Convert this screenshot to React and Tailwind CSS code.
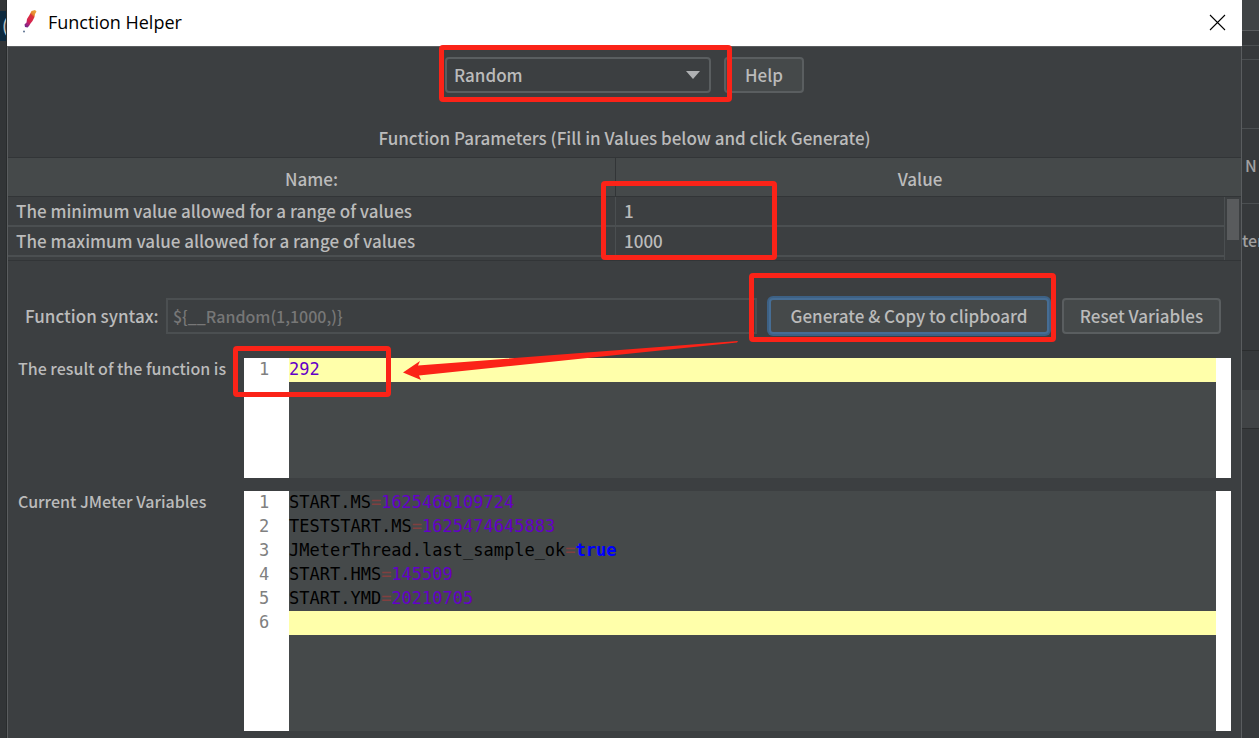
import { useState } from "react";

const params = [
  { name: "The minimum value allowed for a range of values", value: "1" },
  { name: "The maximum value allowed for a range of values", value: "1000" },
];

const resultLines = [{ value: "292", active: true }];

const variableLines = [
  { name: "START.MS", value: "1625468109724" },
  { name: "TESTSTART.MS", value: "1625474645883" },
  { name: "JMeterThread.last_sample_ok", value: "true", keyword: true },
  { name: "START.HMS", value: "145509" },
  { name: "START.YMD", value: "20210705" },
  { active: true },
];

const buttonClass = "h-9 shrink-0 rounded border-2 border-[#5a5e60] bg-[#45494a] whitespace-nowrap";

function FeatherIcon() {
  return (
    <svg width="16" height="26" viewBox="0 0 16 26" aria-hidden="true">
      <defs>
        <linearGradient id="feather" x1="0.8" y1="0" x2="0.2" y2="1">
          <stop offset="0" stopColor="#eba63c" />
          <stop offset="0.22" stopColor="#e4872f" />
          <stop offset="0.32" stopColor="#d9343a" />
          <stop offset="0.65" stopColor="#d62350" />
          <stop offset="0.85" stopColor="#a5237f" />
          <stop offset="1" stopColor="#6e2a86" />
        </linearGradient>
      </defs>
      <path d="M9.500 2 13 1 14.500 2.500 13 5 12.500 8 10.500 12 8.500 14.500 7 17 5.500 18.500 3 18 2.500 15.500 4.500 13.500 5 10 7.500 6Z" fill="url(#feather)" />
      <circle cx="2" cy="22.500" r="1" fill="#5d7391" />
    </svg>
  );
}

// red marker frame laid over the part it points out
function Marker({ className }) {
  return <div className={`pointer-events-none absolute z-10 rounded border-[5px] border-[#fb2318] ${className}`} />;
}

function Editor({ label, lines, className, children }) {
  return (
    <section className="flex pr-[10px]" aria-label={label}>
      <h2 className="w-[236px] shrink-0 pl-[10px] text-[16px] leading-5 whitespace-nowrap">{label}</h2>
      <div className={`relative flex min-w-0 flex-1 bg-[#45494a] font-['DejaVu_Sans_Mono',monospace] text-[17px] leading-6 font-normal ${className}`}>
        <div className="w-[45px] shrink-0 bg-white pr-[5px] text-center leading-[23px] text-[#808080]">
          {lines.map((line, i) => (
            <div key={i} className="h-6">{i + 1}</div>
          ))}
        </div>
        <pre className="min-w-0 flex-1 font-['DejaVu_Sans_Mono',monospace] leading-[23px] text-black">
          {lines.map((line, i) => (
            <div key={i} className={line.active ? "h-6 bg-[#ffffaa]" : "h-6"}>
              {line.name}
              {line.name && <span className="text-[#804040]">=</span>}
              <span className={line.keyword ? "font-bold text-[#0000ff]" : "text-[#6400c8]"}>{line.value}</span>
            </div>
          ))}
        </pre>
        <div className="w-[15px] shrink-0 bg-white" />
        {children}
      </div>
    </section>
  );
}

export default function App() {
  const [fn, setFn] = useState("Random");

  return (
    <div className="flex min-h-screen bg-[#323537] font-['Noto_Sans_CJK_SC',sans-serif] text-[17px] font-medium text-[#bbbbbb]">
      {/* Window behind, left edge */}
      <div className="flex w-[7px] shrink-0 flex-col overflow-hidden border-r border-[#292c2d] leading-[28px]">
        <div className="mt-[11px] h-[30px] bg-[#0d293e] pl-[2px]">(</div>
      </div>

      <main className="flex min-w-0 flex-1 flex-col bg-[#3c3f41]">
        <header className="flex h-[46px] items-center bg-white pr-[16px] pb-[2px] pl-[15px] font-['Open_Sans',sans-serif] text-[18px] font-normal text-black">
          <FeatherIcon />
          <h1 className="ml-[10px] flex-1">Function Helper</h1>
          <button aria-label="Close">
            <svg width="17" height="17" viewBox="0 0 17 17" stroke="#000" strokeWidth="1.1">
              <path d="M1 1 16 16M16 1 1 16" />
            </svg>
          </button>
        </header>

        <div className="flex flex-1 flex-col border-x border-t border-[#5a5d5f]">
          <div className="flex justify-center gap-[13px] pt-[10px]">
            <div className="relative">
              <select
                aria-label="Function"
                value={fn}
                onChange={(e) => setFn(e.target.value)}
                className="h-9 w-[266px] appearance-none rounded border-2 border-[#5a5e60] bg-[#3c3f41] px-[7px]"
              >
                <option>Random</option>
              </select>
              <svg className="pointer-events-none absolute top-[14px] right-[11px]" width="14" height="8" viewBox="0 0 14 8">
                <path d="M0 0H14L7 8Z" fill="#afb1b3" />
              </svg>
              <Marker className="-top-[12px] -right-[21px] -bottom-[9px] -left-[6px]" />
            </div>
            <button className={`${buttonClass} w-[80px]`}>Help</button>
          </div>

          <p id="params" className="mt-[32px] mb-[6px] text-center leading-[26px]">
            Function Parameters (Fill in Values below and click Generate)
          </p>

          <div className="flex h-[104px] border-y border-[#323537]">
            <div className="min-w-0 flex-1">
              <table aria-labelledby="params" className="w-full table-fixed border-separate border-spacing-0">
                <thead>
                  <tr className="bg-[#45494a]">
                    <th className="h-[39px] border-r border-b border-[#323537] p-0 pt-1 leading-7 font-medium">Name:</th>
                    <th className="relative h-[39px] border-b border-[#323537] p-0 pt-1 leading-7 font-medium">
                      Value
                      <Marker className="top-[23px] -left-[15px] h-[79px] w-[176px]" />
                    </th>
                  </tr>
                </thead>
                <tbody>
                  {params.map((p) => (
                    <tr key={p.name}>
                      <td className="h-[30px] border-r border-b-2 border-[#4b4f51] p-0 pl-[8px] leading-7">{p.name}</td>
                      <td className="h-[30px] border-b-2 border-[#4b4f51] p-0 pl-[8px] leading-7">{p.value}</td>
                    </tr>
                  ))}
                </tbody>
              </table>
            </div>
            <div className="flex w-[17px] flex-col">
              <div className="h-[39px] border-b border-[#323537] bg-[#45494a]" />
              <div className="flex-1 border-l border-[#4b4f51] pt-[2px] pr-[2px] pl-[2px]">
                <div className="h-[41px] bg-[#595b5d]" />
              </div>
            </div>
          </div>

          <div className="mt-[37px] flex items-center pr-[20px] pl-[17px]">
            <label htmlFor="syntax" className="w-[141px] shrink-0">Function syntax:</label>
            <input
              id="syntax"
              readOnly
              value="${__Random(1,1000,)}"
              className="h-9 min-w-0 flex-1 border-2 border-[#4b4f51] bg-[#3c3f41] px-[5px] text-[16px] text-[#777777]"
            />
            <div className="relative ml-[12px]">
              <button className="h-9 w-[280px] rounded border-2 border-[#466d94] bg-[#45494a] whitespace-nowrap ring-2 ring-[#3d6185]">
                Generate &amp; Copy to clipboard
              </button>
              <Marker className="-top-[25px] -right-[7px] -bottom-[8px] -left-[20px]" />
            </div>
            <button className={`${buttonClass} ml-[13px] w-[159px]`}>Reset Variables</button>
          </div>

          <div className="mt-6 flex flex-col gap-[13px] pb-[7px]">
            <Editor label="The result of the function is" lines={resultLines} className="h-[120px]">
              <Marker className="-top-[12px] -left-[11px] h-[51px] w-[158px]" />
              <svg className="absolute -top-[17px] left-[159px]" width="336" height="42" viewBox="0 0 336 42" fill="#fb2318">
                <path d="M0 31.500 17 20 15 24.500 335 0 334 1.500 16 34.500 18 39Z" />
              </svg>
            </Editor>
            <Editor label="Current JMeter Variables" lines={variableLines} className="h-[240px]" />
          </div>
        </div>
      </main>

      {/* Window behind, right edge */}
      <div className="w-[17px] shrink-0 overflow-hidden bg-[#36393b] text-[16px] text-[#a0a0a0]">
        <div className="h-[31px] border-b border-[#5a5d5f] bg-[#404445]" />
        <div className="h-[15px] border-b border-[#4b4f51]" />
        <div className="h-[14px] border-b border-[#4b4f51]" />
        <div className="h-[69px] border-b border-[#4b4f51]" />
        <div className="h-[75px] border-b border-[#4b4f51] pl-[3px] leading-[72px]">N</div>
        <div className="h-[147px] border-b border-[#2b2d2e] leading-[72px]">ter</div>
        <div className="h-[39px]" />
        <div className="h-[39px] border-b border-[#2b2d2e] bg-[#404345]" />
      </div>
    </div>
  );
}
